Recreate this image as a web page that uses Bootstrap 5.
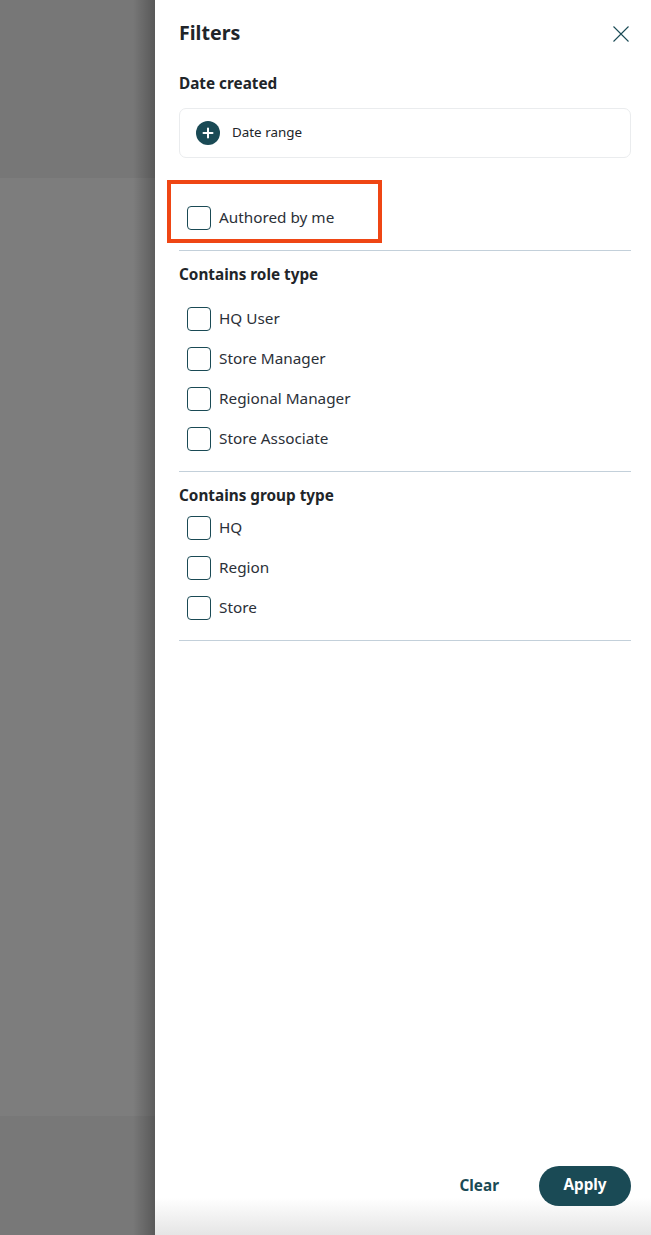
<!DOCTYPE html>
<html lang="en">
<head>
<meta charset="utf-8">
<title>Filters</title>
<link href="https://cdn.jsdelivr.net/npm/bootstrap@5.3.0/dist/css/bootstrap.min.css" rel="stylesheet">
<style>
html,body{height:1235px;overflow:hidden}
body{font-family:"Noto Sans","Liberation Sans",sans-serif;color:#212529;background:#7c7c7c}
.stage{height:1235px}
.dim{width:155px;background:#7d7d7d}
.dim-top{height:178px;background:#777777}
.dim-bottom{height:119px;background:#787878}
.dim-mid{flex:1 1 auto}
.dim-col{position:relative}
.dim-col::after{content:"";position:absolute;top:0;bottom:0;right:0;width:22px;background:linear-gradient(to right,rgba(0,0,0,0),rgba(0,0,0,.26))}
.drawer{width:496px;background:#fff;padding:0 20px 0 24px;position:relative}
.drawer-title{font-size:19.6px;font-weight:700;line-height:26px;margin:20px 0 0}
.drawer-head{height:46px;padding-right:2px}
.close-x{width:16px;height:16px;color:#1a4a55;margin-top:26px;background:none;border:0;padding:0;display:block}
.sect-title{font-size:15.3px;font-weight:700;line-height:22px;margin:0}
.sect-first{margin-top:26px}
.sect-role{margin-top:12px;margin-bottom:13px}
.sect-group{margin-top:12px;margin-bottom:1px}
.date-box{height:50px;border:1px solid #eaecee;border-radius:7px;margin-top:14px;padding-left:16px;gap:12px;font-size:13.4px}
.date-label{padding-bottom:2px}
.plus{width:24px;height:24px;border-radius:50%;background:#1a4a55;flex:none}
.spacer{height:39px}
.opt{height:40px;padding-left:8px;gap:8px;font-size:15.3px;color:#2b3038}
.box{width:24px;height:24px;border:1px solid #1a4a55;border-radius:4px;flex:none;background:#fff;margin-top:2px}
.rule{border:0;border-top:1px solid #c3d0da;opacity:1;margin:13px 0 0}
.mark-red{position:absolute;left:12px;top:180px;width:215px;height:63px;border:4px solid #ef4614}
.foot{position:absolute;left:0;right:0;bottom:0;height:69px;padding:0 20px 29px 0;background:linear-gradient(to bottom,#fff 0,#fff 46%,#e5e5e5 100%);gap:40px}
.btn-clear{color:#1a4a55;font-weight:700;font-size:15.3px;padding:0 0 2px;border:0;height:40px}
.btn-apply{width:92px;height:40px;border-radius:20px;background:#1a4a55;color:#fff;font-weight:700;font-size:15.3px;padding:0 0 3px;border:0}
.btn-apply:hover{background:#1a4a55;color:#fff}
</style>
</head>
<body>
<div class="stage d-flex">
  <div class="dim dim-col d-flex flex-column">
    <div class="dim-top"></div>
    <div class="dim-mid"></div>
    <div class="dim-bottom"></div>
  </div>
  <aside class="drawer">
    <div class="drawer-head d-flex justify-content-between align-items-start">
      <h1 class="drawer-title">Filters</h1>
      <button class="close-x" type="button" aria-label="Close">
        <svg width="16" height="16" viewBox="0 0 16 16" fill="none" stroke="currentColor" stroke-width="1.1" class="d-block"><path d="M.5.5l15 15M15.500.5l-15 15"/></svg>
      </button>
    </div>
    <h2 class="sect-title sect-first">Date created</h2>
    <div class="date-box d-flex align-items-center">
      <span class="plus d-flex align-items-center justify-content-center">
        <svg width="12" height="12" viewBox="0 0 12 12" fill="none" stroke="#fff" stroke-width="2" stroke-linecap="round" class="d-block"><path d="M6 1.500v9M1.500 6h9"/></svg>
      </span>
      <span class="date-label">Date range</span>
    </div>
    <div class="spacer"></div>
    <div class="opt d-flex align-items-center"><span class="box"></span><span>Authored by me</span></div>
    <hr class="rule">
    <h2 class="sect-title sect-role">Contains role type</h2>
    <div class="opt d-flex align-items-center"><span class="box"></span><span>HQ User</span></div>
    <div class="opt d-flex align-items-center"><span class="box"></span><span>Store Manager</span></div>
    <div class="opt d-flex align-items-center"><span class="box"></span><span>Regional Manager</span></div>
    <div class="opt d-flex align-items-center"><span class="box"></span><span>Store Associate</span></div>
    <hr class="rule">
    <h2 class="sect-title sect-group">Contains group type</h2>
    <div class="opt d-flex align-items-center"><span class="box"></span><span>HQ</span></div>
    <div class="opt d-flex align-items-center"><span class="box"></span><span>Region</span></div>
    <div class="opt d-flex align-items-center"><span class="box"></span><span>Store</span></div>
    <hr class="rule">
    <div class="mark-red"></div>
    <div class="foot d-flex justify-content-end align-items-end">
      <button class="btn btn-clear" type="button">Clear</button>
      <button class="btn btn-apply" type="button">Apply</button>
    </div>
  </aside>
</div>
<script src="https://cdn.jsdelivr.net/npm/bootstrap@5.3.0/dist/js/bootstrap.bundle.min.js"></script>
</body>
</html>
